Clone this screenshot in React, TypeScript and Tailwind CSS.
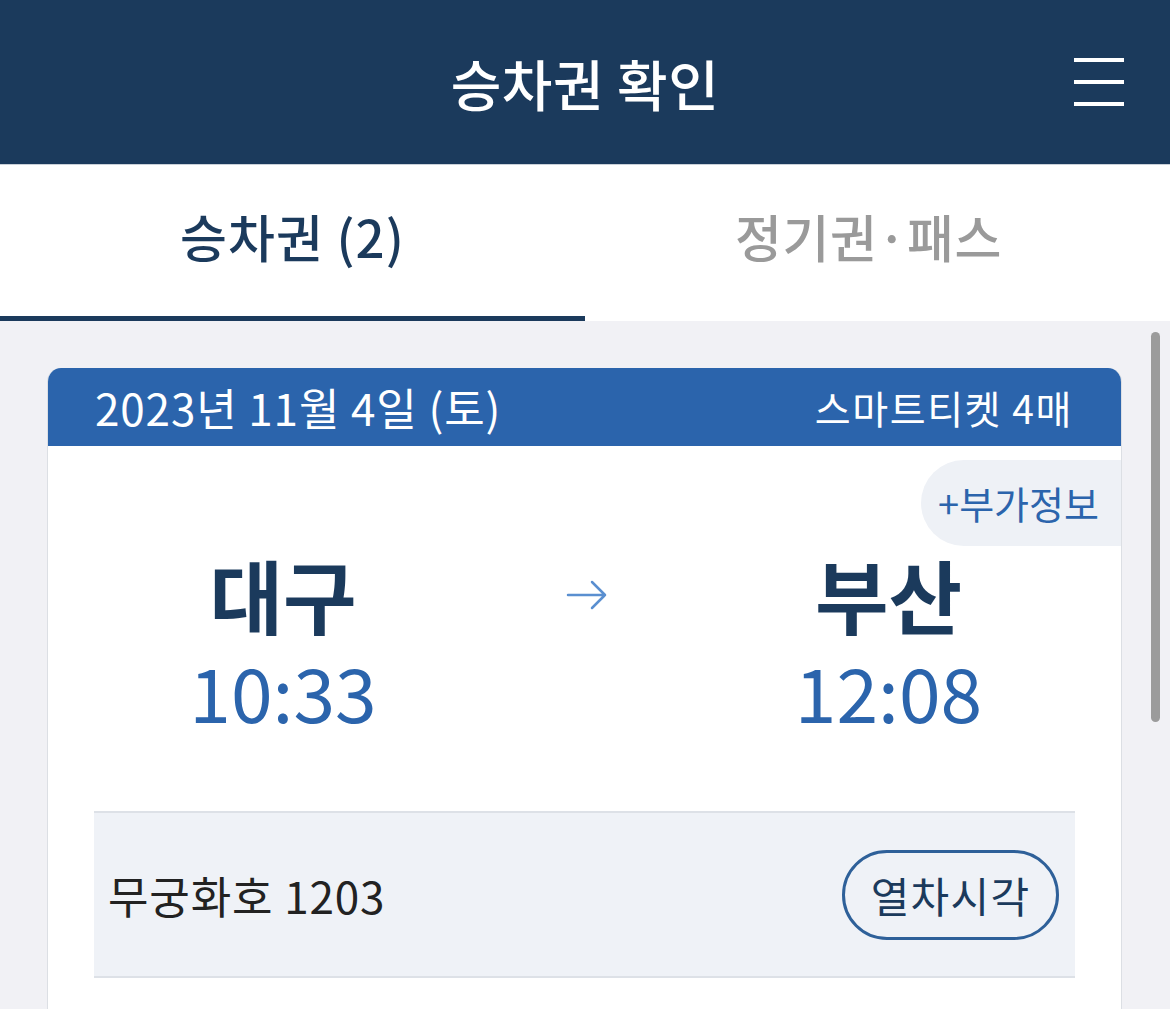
import React from 'react';

const font = { fontFamily: '"Noto Sans CJK KR", "Noto Sans", sans-serif' };

function Hamburger() {
  return (
    <div className="flex h-[48px] w-[50px] flex-col justify-between">
      <span className="block h-[4px] w-full bg-white" />
      <span className="block h-[4px] w-full bg-white" />
      <span className="block h-[4px] w-full bg-white" />
    </div>
  );
}

function Arrow() {
  return (
    <svg width="42" height="32" viewBox="0 0 42 32" fill="none">
      <path d="M2 16H39M26 3L39 16L26 29" stroke="#5a8fd0" strokeWidth="2.5" strokeLinecap="round" strokeLinejoin="round" />
    </svg>
  );
}

export default function App() {
  return (
    <div className="relative h-[1009px] w-[1170px] overflow-hidden bg-[#f1f1f5]" style={font}>
      {/* Top bar */}
      <header className="relative flex h-[165px] items-center justify-center bg-[#1b3a5c] border-b border-[#c9d0d8]">
        <h1 className="text-[55px] font-medium leading-none tracking-[0.01em] text-white">승차권 확인</h1>
        <div className="absolute right-[46px] top-[58px]">
          <Hamburger />
        </div>
      </header>

      {/* Tabs */}
      <nav className="grid h-[156px] grid-cols-2 bg-white">
        <div className="flex flex-col">
          <div className="flex flex-1 items-center justify-center pb-[8px] text-[51px] font-medium leading-none tracking-[0.02em] text-[#1b3a5c]">
            승차권 (2)
          </div>
          <div className="h-[5px] bg-[#1b3a5c]" />
        </div>
        <div className="flex items-center justify-center pb-[13px] pr-[18px] text-[51px] font-medium leading-none tracking-[0.01em] text-[#9a9a9a]">
          정기권·패스
        </div>
      </nav>

      {/* Ticket card */}
      <main className="px-[47px] pt-[47px] pr-[48px]">
        <section className="overflow-hidden rounded-t-[14px] border-x border-[#dcdfe4] bg-white">
          <div className="flex h-[78px] items-center justify-between bg-[#2b64ac] pl-[47px] pr-[48px] text-white">
            <span className="text-[44px] leading-none tracking-[0.02em]">2023년 11월 4일 (토)</span>
            <span className="text-[39px] leading-none tracking-[0.04em]">스마트티켓 4매</span>
          </div>

          <div className="flex justify-end pt-[14px]">
            <button className="flex h-[86px] items-center rounded-l-[43px] bg-[#eef1f6] pl-[17px] pr-[22px] text-[38px] leading-none text-[#2b64ac]">
              +부가정보
            </button>
          </div>

          <div className="mt-[4px] grid grid-cols-[470px_138px_1fr]">
            <div className="flex flex-col items-center">
              <span className="text-[80px] font-bold leading-[86px] text-[#1b3a5c]">대구</span>
              <span className="mt-[15px] text-[75px] leading-[80px] text-[#2b64ac]">10:33</span>
            </div>
            <div className="flex justify-center pt-[29px]">
              <Arrow />
            </div>
            <div className="flex flex-col items-center">
              <span className="text-[80px] font-bold leading-[86px] text-[#1b3a5c]">부산</span>
              <span className="mt-[15px] text-[75px] leading-[80px] text-[#2b64ac]">12:08</span>
            </div>
          </div>

          <div className="mx-[46px] mt-[80px] flex h-[167px] items-center justify-between border-y-2 border-[#dde1e7] bg-[#eff2f7] pl-[14px] pr-[16px]">
            <span className="text-[44px] leading-none tracking-[0.02em] text-[#222222]">무궁화호 1203</span>
            <button className="flex h-[90px] w-[217px] items-center justify-center rounded-full border-[3px] border-[#2e6099] text-[42px] leading-none tracking-[0.03em] text-[#1b3a5c]">
              열차시각
            </button>
          </div>
          <div className="h-[60px]" />
        </section>
      </main>

      {/* Overlay scrollbar */}
      <div className="absolute right-[10px] top-[332px] h-[390px] w-[9px] rounded-full bg-[#9b9b9b]" />
    </div>
  );
}
